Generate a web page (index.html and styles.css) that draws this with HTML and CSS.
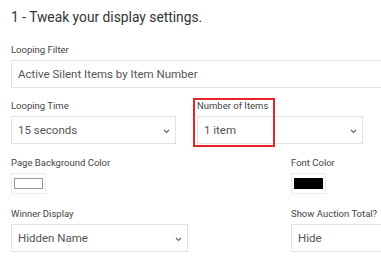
FILE: index.html
```html
<!DOCTYPE html>
<html lang="en">

<head>
  <meta charset="UTF-8" />
  <meta name="viewport" content="width=device-width, initial-scale=1.0" />
  <title>Display Settings</title>
  <link rel="stylesheet" href="styles.css">
</head>

<body>
  <div class="settings">
    <h2 class="step-title">1 - Tweak your display settings.</h2>

    <!-- Looping Filter -->
    <div class="field">
      <label class="field-label">Looping Filter</label>
      <div class="text-box wide">Active Silent Items by Item Number</div>
    </div>

    <!-- Time / Items -->
    <div class="row row-pair">
      <div class="field">
        <label class="field-label">Looping Time</label>
        <div class="select-box">
          <span>15 seconds</span>
          <svg class="chevron" width="7" height="5" viewBox="0 0 7 5"><path d="M1 1l2.5 2.5L6 1" fill="none" stroke="#666" stroke-width="1.2"/></svg>
        </div>
      </div>
      <div class="field highlight-wrap">
        <label class="field-label">Number of Items</label>
        <div class="select-box">
          <span>1 item</span>
          <svg class="chevron" width="7" height="5" viewBox="0 0 7 5"><path d="M1 1l2.5 2.5L6 1" fill="none" stroke="#666" stroke-width="1.2"/></svg>
        </div>
        <div class="highlight"></div>
      </div>
    </div>

    <!-- Colors -->
    <div class="row row-split">
      <div class="field">
        <label class="field-label">Page Background Color</label>
        <div class="swatch"><div class="swatch-color white"></div></div>
      </div>
      <div class="field">
        <label class="field-label">Font Color</label>
        <div class="swatch"><div class="swatch-color black"></div></div>
      </div>
    </div>

    <!-- Winner / Total -->
    <div class="row row-split">
      <div class="field">
        <label class="field-label">Winner Display</label>
        <div class="select-box winner">
          <span>Hidden Name</span>
          <svg class="chevron" width="7" height="5" viewBox="0 0 7 5"><path d="M1 1l2.5 2.5L6 1" fill="none" stroke="#666" stroke-width="1.2"/></svg>
        </div>
      </div>
      <div class="field">
        <label class="field-label">Show Auction Total?</label>
        <div class="select-box total">
          <span>Hide</span>
        </div>
      </div>
    </div>
  </div>
</body>

</html>
```

FILE: styles.css
```css
/* General Styles */
body {
  margin: 0;
  padding: 0;
  background-color: #ffffff;
  font-family: Roboto, "Liberation Sans", Arial, sans-serif;
  color: #333;
  overflow: hidden;
}

/* Page clips the fields that run off to the right */
.settings {
  box-sizing: border-box;
  width: 381px;
  height: 261px;
  overflow: hidden;
  padding: 9px 0 0 11px;
}

.step-title {
  margin: 0 0 19px 0;
  font-size: 13.8px;
  font-weight: 400;
  line-height: 16px;
  color: #333;
}

/* Fields */
.field {
  display: flex;
  flex-direction: column;
}

.field-label {
  font-size: 9.5px;
  line-height: 12px;
  color: #444;
  margin-bottom: 4px;
}

.text-box,
.select-box {
  box-sizing: border-box;
  height: 28px;
  border: 1px solid #e2e2e2;
  background-color: #fff;
  display: flex;
  align-items: center;
  padding: 0 6px;
  color: #555;
  font-size: 11.5px;
}

.text-box.wide {
  width: 420px;
  flex-shrink: 0;
}

.select-box {
  position: relative;
}

.chevron {
  position: absolute;
  right: 5px;
  top: 12px;
}

/* Rows */
.row {
  display: grid;
  margin-top: 12px;
}

.row-pair {
  grid-template-columns: 165px 166px;
  column-gap: 21px;
}

.row-split {
  grid-template-columns: 280px 130px;
  margin-top: 13px;
}

.row-split + .row-split {
  margin-top: 14px;
}

.select-box.winner {
  width: 177px;
}

/* Red callout */
.highlight-wrap {
  position: relative;
}

.highlight {
  position: absolute;
  left: -4px;
  top: -2px;
  width: 82px;
  height: 49px;
  box-sizing: border-box;
  border: 2px solid #e3242b;
}

/* Color swatches */
.swatch {
  box-sizing: border-box;
  width: 35px;
  height: 21px;
  border: 1px solid #ececec;
  display: flex;
  align-items: center;
  justify-content: center;
}

.swatch-color {
  box-sizing: border-box;
  width: 29px;
  height: 11px;
}

.swatch-color.white {
  background-color: #fff;
  border: 1px solid #999;
}

.swatch-color.black {
  background-color: #000;
}
```
